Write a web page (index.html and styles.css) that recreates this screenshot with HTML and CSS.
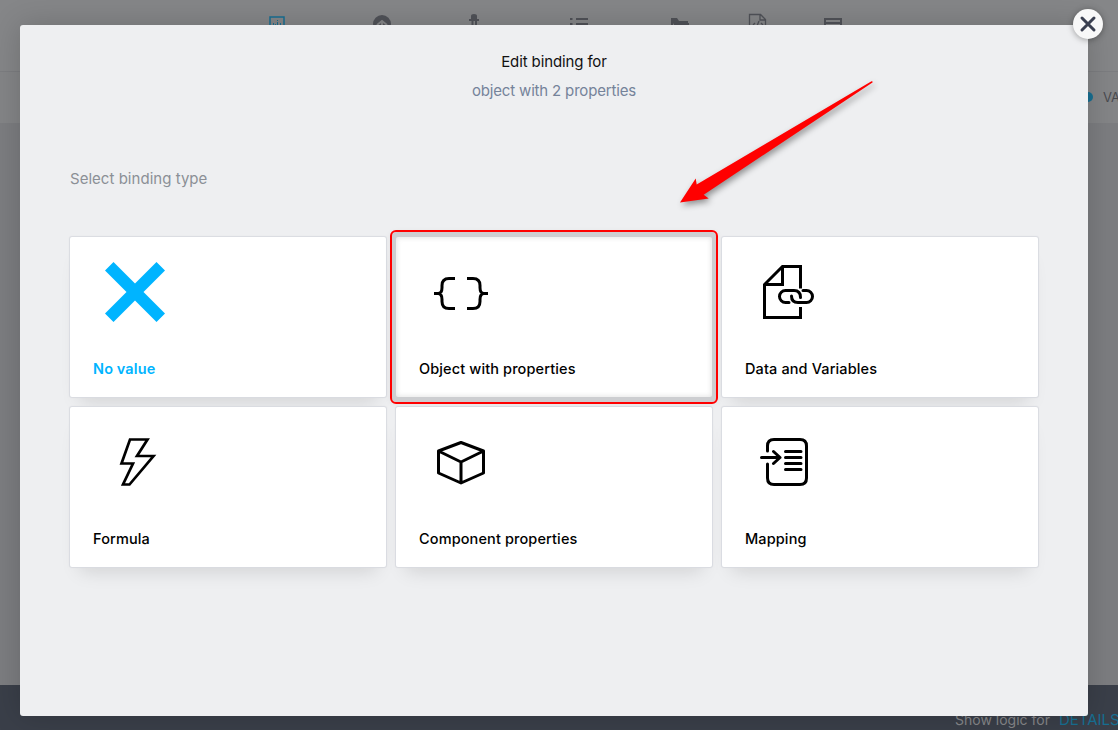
FILE: index.html
```html
<!DOCTYPE html>
<html lang="en">
<head>
<meta charset="utf-8">
<title>Edit binding</title>
<link rel="stylesheet" href="styles.css">
</head>
<body>
<div class="app">
  <header class="toolbar">
    <svg class="tools" width="1118" height="50" viewBox="0 0 1118 50" fill="none" stroke="#505258" stroke-width="2">
      <g stroke="#176f92"><path d="M270 32V17h14v15" stroke-width="1.500"/><path d="M273.500 25v-2M275.500 25v-1M277.500 25v-3M277.500 21v-1M280.500 25v-2" stroke-width="1"/></g>
      <circle cx="382" cy="24" r="9" fill="#505258" stroke="none"/><path d="M377 25l5-4 5 4M382 22v6" stroke="#858688"/>
      <path d="M469 20h10M472.500 21v7M476 21v7"/><path d="M471 20v-4q0-2 3-2t3 2v4z" fill="#505258" stroke="none"/>
      <path d="M570 19h2.500M576 19h12M570 24h2.500M576 24h12"/>
      <path d="M671 28V18h6l2 3h9v2h-14l-3 5z" fill="#505258" stroke="none"/><path d="M674 24h15"/>
      <path d="M749.500 28V14.500h11l5 5V28M760 15v5h6M755 23l-2 2M761 23l2 2M759 21l-2 5" stroke-width="1.300"/>
      <path d="M825 28v-9h16v9M825 23h16"/>
    </svg>
  </header>
  <div class="subbar"><span class="dot"></span><span class="subbar-text">VARIABLES</span></div>
  <main class="canvas"></main>
  <footer class="footer"><span>Show logic for</span><span class="footer-link">DETAILS</span></footer>
</div>

<section class="modal">
  <h1 class="title">Edit binding for</h1>
  <p class="subtitle">object with 2 properties</p>
  <p class="prompt">Select binding type</p>
  <div class="grid">
    <div class="tile tile-active">
      <svg class="icon" viewBox="0 0 60 60"><path d="M8.500 0L30 21.500 51.500 0 60 8.500 38.500 30 60 51.500 51.500 60 30 38.500 8.500 60 0 51.500 21.500 30 0 8.500z" fill="#00b4ff" stroke="none"/></svg>
      <span class="label label-none">No value</span>
    </div>
    <div class="tile tile-hover">
      <svg class="icon" viewBox="0 0 60 60"><path d="M24 16.500h-6c-5 0-7 2.500-7 7v2c0 4-1.500 6-4 6H3h4c2.500 0 4 2 4 6v2c0 4.500 2 7 7 7h6M36 16.500h6c5 0 7 2.500 7 7v2c0 4 1.500 6 4 6h4-4c-2.500 0-4 2-4 6v2c0 4.500-2 7-7 7h-6"/></svg>
      <span class="label">Object with properties</span>
    </div>
    <div class="tile">
      <svg class="icon" viewBox="0 0 60 60"><path d="M43.500 26.500v-22h-18l-18 18v33h36V45M25.500 4.500v18h-18"/><path stroke-linecap="round" d="M32 40.500h-3.500a6 6 0 0 1 0-12H37q6.500 0 6.500 7M46 28.500h3.500a6 6 0 0 1 0 12H41q-6.500 0-6.500-6.500"/></svg>
      <span class="label">Data and Variables</span>
    </div>
    <div class="tile">
      <svg class="icon" viewBox="0 0 60 60"><path stroke-width="2.700" d="M25 7.500h17.500L32 24H48.500L24.500 52.500h-6.500l10-21h-11.500z"/></svg>
      <span class="label">Formula</span>
    </div>
    <div class="tile">
      <svg class="icon" viewBox="0 0 60 60"><path stroke-linejoin="round" d="M30 10.500L52.500 19v22L30 51 7.500 41V19zM7.500 19L30 30l22.500-11M30 30v21"/></svg>
      <span class="label">Component properties</span>
    </div>
    <div class="tile">
      <svg class="icon" viewBox="0 0 60 60"><path stroke-linecap="round" stroke-linejoin="round" d="M10.500 19v-5q0-6.500 6.500-6.500h26q6.500 0 6.500 6.500v32q0 6.500-6.500 6.500H17q-6.500 0-6.500-6.500V32M4.500 25.500H23M16.500 19.500l6.500 6-6.500 6M28.500 19.500h15.500M28.500 25.500h15.500M28.500 31.500h15.500M28.500 37.500h15.500"/></svg>
      <span class="label">Mapping</span>
    </div>
  </div>
</section>

<button class="close" aria-label="Close"><svg width="30" height="30" viewBox="0 0 30 30"><path d="M9 9l12 12M21 9L9 21" stroke="#3a3f50" stroke-width="3" stroke-linecap="round"/></svg></button>

<svg class="annotation" width="1118" height="730" viewBox="0 0 1118 730">
  <rect x="391" y="231" width="326" height="172" rx="5" fill="none" stroke="#f00" stroke-width="2"/>
  <path class="arrow" d="M680 202.500L695.700 178.500 696.700 184.500 871.500 81.200Q873 81 872.500 82.500L703.700 194.700 708.700 198.400z" fill="#f00"/>
</svg>
</body>
</html>
```
FILE: styles.css
```css
* { box-sizing: border-box; }
body {
  margin: 0;
  width: 1118px;
  height: 730px;
  overflow: hidden;
  position: relative;
  font-family: Inter, "Liberation Sans", sans-serif;
  font-size: 15px;
}
.app { display: flex; flex-direction: column; height: 730px; }
.toolbar { height: 72px; background: #858688; border-bottom: 1px solid #7c7d80; }
.tools { display: block; }
.subbar {
  height: 51px;
  background: #848587;
  display: flex;
  align-items: center;
  gap: 10px;
  padding: 0 0 2px 1083px;
  white-space: nowrap;
}
.dot { flex: none; width: 10px; height: 10px; border-radius: 50%; background: #176f92; }
.subbar-text { font-size: 13px; color: #4a4b50; }
.canvas { flex: 1; background: #7c7d80; }
.footer {
  height: 45px;
  background: #3a3f49;
  color: #86878a;
  display: flex;
  align-items: flex-end;
  gap: 9px;
  padding: 0 0 1px 955px;
  white-space: nowrap;
  font-size: 14px;
  line-height: 18px;
}
.footer-link { color: #176f92; font-size: 15px; }
.modal {
  position: absolute;
  left: 20px;
  top: 25px;
  width: 1068px;
  height: 691px;
  padding: 27px 50px 0;
  background: #eeeff1;
  border-radius: 3px;
  box-shadow: 0 0 30px rgba(0, 0, 0, .18);
}
.title, .subtitle, .prompt { margin: 0; font-size: 15px; font-weight: 400; line-height: 20px; }
.title { text-align: center; color: #111; letter-spacing: -.12px; }
.subtitle { text-align: center; margin-top: 9px; color: #75839a; letter-spacing: -.17px; }
.prompt { margin-top: 68px; color: #8b8f96; letter-spacing: .03px; }
.grid {
  margin-top: 48px;
  display: grid;
  grid-template-columns: repeat(3, 316px);
  grid-auto-rows: 160px;
  gap: 10px;
}
.tile {
  display: flex;
  flex-direction: column;
  justify-content: space-between;
  padding: 25px 23px 18px;
  background: #fff;
  border-radius: 2px;
  box-shadow: 0 0 1px 1px #d9dbe0, 0 14px 18px -10px rgba(0, 0, 0, .13);
}
.tile-hover {
  box-shadow: inset 0 0 5px 1px rgba(0, 0, 0, .1), 0 0 0 5px #cdced1, 0 1px 6px 6px rgba(0, 0, 0, .06);
}
.icon {
  display: block;
  width: 60px;
  height: 60px;
  margin-left: 12px;
  fill: none;
  stroke: #000;
  stroke-width: 3;
}
.label { font-weight: 500; font-size: 14.500px; line-height: 20px; letter-spacing: .12px; color: #000; white-space: nowrap; }
.label-none { color: #00b4ff; font-weight: 600; }
.close {
  position: absolute;
  left: 1073px;
  top: 9px;
  width: 30px;
  height: 30px;
  padding: 0;
  border: 0;
  border-radius: 50%;
  background: #f8f8f8;
  box-shadow: 0 1px 6px rgba(0, 0, 0, .35);
}
.close svg { display: block; }
.annotation { position: absolute; left: 0; top: 0; pointer-events: none; }
.arrow { filter: drop-shadow(2px 3px 3px rgba(0, 0, 0, .4)); }
```
